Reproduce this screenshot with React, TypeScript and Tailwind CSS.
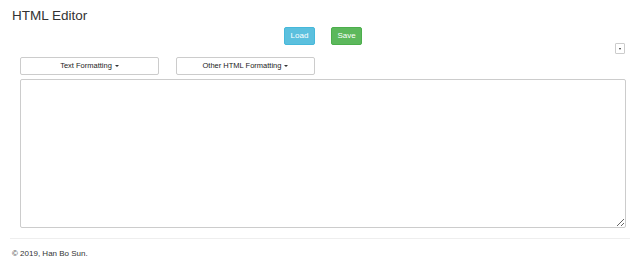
import React from "react";

function Caret() {
  return (
    <span className="inline-block ml-[3px] align-middle w-0 h-0 border-t-[2px] border-t-[#333] border-x-[2px] border-x-transparent" />
  );
}

export default function App() {
  return (
    <div className="w-[640px] h-[261px] bg-white text-[#333] overflow-hidden" style={{ fontFamily: '"Liberation Sans", Arial, sans-serif' }}>
      <div className="px-[12px] pt-[7px]">
        <h1 className="text-[13.5px] leading-[17px] font-normal text-[#333]">HTML Editor</h1>
      </div>
      <div className="flex justify-center gap-[16px] pl-[6px] mt-[3px]">
        <button className="w-[31px] h-[18px] rounded-[2px] bg-[#5bc0de] border border-[#46b8da] text-white text-[8px] leading-none">Load</button>
        <button className="w-[31px] h-[18px] rounded-[2px] bg-[#5cb85c] border border-[#4cae4c] text-white text-[8px] leading-none">Save</button>
      </div>
      <div className="flex justify-end pr-[15px] mt-[-2px]">
        <button className="w-[10px] h-[11px] border border-[#ccc] rounded-[1px] bg-white flex items-center justify-center">
          <span className="inline-block w-0 h-0 border-t-[2px] border-t-[#333] border-x-[1.5px] border-x-transparent" />
        </button>
      </div>
      <div className="flex gap-[17px] pl-[20px] mt-[3px]">
        <button className="w-[139px] h-[18px] border border-[#ccc] rounded-[2px] bg-white text-[7.5px] leading-none text-[#222] flex items-center justify-center">
          Text Formatting
          <Caret />
        </button>
        <button className="w-[139px] h-[18px] border border-[#ccc] rounded-[2px] bg-white text-[7.5px] leading-none text-[#222] flex items-center justify-center">
          Other HTML Formatting
          <Caret />
        </button>
      </div>
      <div className="pl-[20px] pr-[14px] mt-[4px]">
        <textarea className="block w-full h-[149px] border border-[#ccc] rounded-[2px] bg-white outline-none" />
      </div>
      <div className="mx-[10px] mt-[10px] border-t border-[#eee]" />
      <div className="px-[12px] pt-[10px] text-[8px] leading-[10px] text-[#333]">© 2019, Han Bo Sun.</div>
    </div>
  );
}
